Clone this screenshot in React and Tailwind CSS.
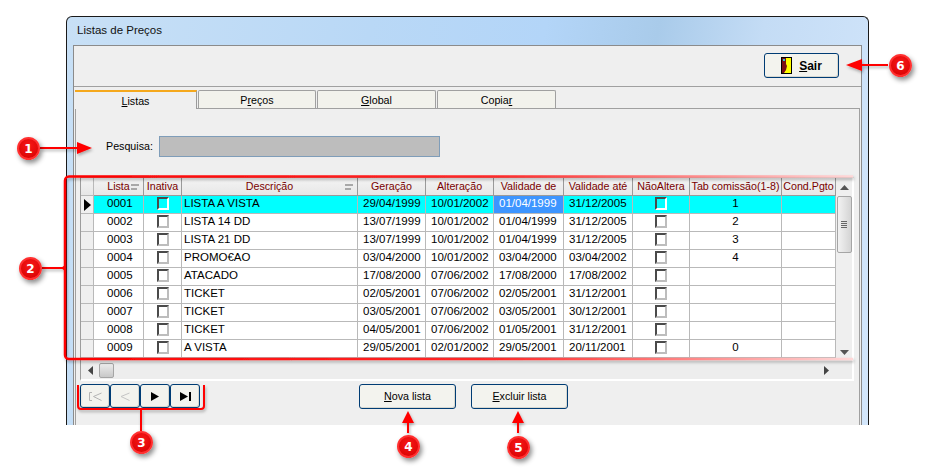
import React from "react";

const cols = [
  { label: "Lista", w: "w-[50px]", sort: true },
  { label: "Inativa", w: "w-[38px]" },
  { label: "Descrição", w: "w-[176px]", sort: true },
  { label: "Geração", w: "w-[68px]" },
  { label: "Alteração", w: "w-[68px]" },
  { label: "Validade de", w: "w-[70px]" },
  { label: "Validade até", w: "w-[69px]" },
  { label: "NãoAltera", w: "w-[57px]" },
  { label: "Tab comissão(1-8)", w: "w-[92px]" },
  { label: "Cond.Pgto", w: "w-[54px]" },
];

const rows = [
  ["0001", "LISTA A VISTA", "29/04/1999", "10/01/2002", "01/04/1999", "31/12/2005", "1"],
  ["0002", "LISTA 14 DD", "13/07/1999", "10/01/2002", "01/04/1999", "31/12/2005", "2"],
  ["0003", "LISTA 21 DD", "13/07/1999", "10/01/2002", "01/04/1999", "31/12/2005", "3"],
  ["0004", "PROMO€AO", "03/04/2000", "10/01/2002", "03/04/2000", "03/04/2002", "4"],
  ["0005", "ATACADO", "17/08/2000", "07/06/2002", "17/08/2000", "17/08/2002", ""],
  ["0006", "TICKET", "02/05/2001", "07/06/2002", "02/05/2001", "31/12/2001", ""],
  ["0007", "TICKET", "03/05/2001", "07/06/2002", "03/05/2001", "30/12/2001", ""],
  ["0008", "TICKET", "04/05/2001", "07/06/2002", "01/05/2001", "31/12/2001", ""],
  ["0009", "A VISTA", "29/05/2001", "02/01/2002", "29/05/2001", "20/11/2001", "0"],
];

function Check({ selected }) {
  return (
    <span className={`block w-[12px] h-[13px] border-2 border-t-[#4a4a4a] border-l-[#4a4a4a] ${selected ? "border-r-white border-b-white" : "border-r-[#bdbdbd] border-b-[#bdbdbd]"}`} />
  );
}

function Cell({ w, className = "", children }) {
  return (
    <div className={`${w} h-full shrink-0 flex items-center pb-[2px] border-r border-b border-[#b9b9b9] overflow-hidden whitespace-nowrap ${className}`}>
      {children}
    </div>
  );
}

function GridRow({ row, selected }) {
  const [id, desc, ger, alt, de, ate, tab] = row;
  return (
    <div className={`flex h-[18px] ${selected ? "bg-[#00ffff]" : "bg-white"}`}>
      <div className="w-[13px] shrink-0 flex items-center justify-center bg-[#efefef] border-r border-b border-[#b9b9b9]">
        {selected && <span className="block border-y-[6px] border-y-transparent border-l-[7px] border-l-black" />}
      </div>
      <Cell w="w-[50px]" className="pl-[13px]">{id}</Cell>
      <Cell w="w-[38px]" className="justify-center"><Check selected={selected} /></Cell>
      <Cell w="w-[176px]" className="pl-[2px]">{desc}</Cell>
      <Cell w="w-[68px]" className="pl-[5px]">{ger}</Cell>
      <Cell w="w-[68px]" className="pl-[5px]">{alt}</Cell>
      <Cell w="w-[70px]" className={`pl-[5px] ${selected ? "bg-[#3d95ff] text-white" : ""}`}>{de}</Cell>
      <Cell w="w-[69px]" className="pl-[5px]">{ate}</Cell>
      <Cell w="w-[57px]" className="justify-center"><Check selected={selected} /></Cell>
      <Cell w="w-[92px]" className="justify-center">{tab}</Cell>
      <Cell w="w-[54px]" />
    </div>
  );
}

function SortMark({ className = "" }) {
  return (
    <span className={`flex flex-col items-end gap-[2px] ${className}`}>
      <span className="block w-[8px] h-[2px] bg-[#a8a8a8]" />
      <span className="block w-[6px] h-[2px] bg-[#a8a8a8] mr-[2px]" />
    </span>
  );
}

function Tab({ w, active, children }) {
  if (active) {
    return (
      <div className={`${w} h-[19px] -mb-px z-10 flex items-center justify-center pt-[1px] bg-[#efefef] border-t-2 border-[#f5a81c] border-r border-r-[#9a9a9a]`}>
        {children}
      </div>
    );
  }
  return (
    <div className={`${w} h-[18px] flex items-center justify-center pt-[2px] bg-[#f2f2ec] border border-b-0 border-[#a0a0a0] rounded-t-[2px]`}>
      {children}
    </div>
  );
}

function Btn({ className = "", children }) {
  return (
    <button className={`flex items-center justify-center bg-[#f3f3ee] border border-[#003c74] rounded-[3px] shadow-[inset_-1px_-1px_0_#d8d8d0] ${className}`}>
      {children}
    </button>
  );
}

function Badge({ n, className }) {
  return (
    <div className={`absolute w-[23px] h-[23px] rounded-full flex items-center justify-center text-white text-[12px] font-bold border-2 border-[#ff3030] bg-[radial-gradient(circle_at_50%_35%,#f81818,#d40000)] shadow-[2px_3px_5px_rgba(0,0,0,0.45)] [font-family:'DejaVu_Sans',sans-serif] ${className}`}>
      {n}
    </div>
  );
}

function ScrollUp() {
  return (
    <svg width="9" height="5" viewBox="0 0 9 5"><path d="M4.5 0L9 5H0z" fill="#555" /></svg>
  );
}

export default function App() {
  return (
    <div className="relative w-[929px] h-[476px] bg-white overflow-hidden text-[11.5px] text-black [font-family:'Liberation_Sans',sans-serif] pt-[16px] pl-[66px]">
      {/* janela */}
      <div className="w-[803px] h-[409px] flex flex-col border-x border-t border-[#1a1a1a] rounded-t-[6px] bg-[linear-gradient(100deg,#c8e0f6_0%,#b9d8f6_35%,#b3d5f8_55%,#a9cbea_68%,#c4dcf5_80%,#d3e6fb_100%)] px-[6px]">
        <div className="h-[28px] shrink-0 flex items-center pl-[4px] text-[11.5px] text-[#111]">Listas de Preços</div>
        <div className="flex-1 flex flex-col bg-[#efefef] border-x border-t border-[#8b8b8b]">
          <div className="h-[41px] shrink-0 flex items-start justify-end pt-[7px] pr-[22px] border-b border-[#a0a0a0]">
            <Btn className="w-[75px] h-[25px] gap-[7px] font-bold text-[12px]">
              <svg width="11" height="17" viewBox="0 0 11 17">
                <rect width="11" height="17" fill="#000" />
                <rect x="1" y="1" width="9" height="15" fill="#ffff00" />
                <path d="M1 1h4v6l1 2-1 4-2 3H1z" fill="#7a0f16" />
                <rect x="2" y="2" width="2" height="2" fill="#33c4d6" />
              </svg>
              <span><u>S</u>air</span>
            </Btn>
          </div>

          <div className="flex-1 flex flex-col pt-[3px] pl-[1px] pr-[1px]">
            <div className="flex h-[18px] items-end gap-px shrink-0 text-[10.7px]">
              <Tab w="w-[122px]" active><span><u>L</u>istas</span></Tab>
              <Tab w="w-[118px]"><span>P<u>r</u>eços</span></Tab>
              <Tab w="w-[119px]"><span><u>G</u>lobal</span></Tab>
              <Tab w="w-[119px]"><span>Copia<u>r</u></span></Tab>
            </div>
            <div className="flex-1 flex flex-col border-l border-r border-t border-[#a0a0a0] px-[4px]">
              <div className="h-[27px] shrink-0" />
              <div className="flex items-center h-[21px] shrink-0 pl-[26px] gap-[7px]">
                <span className="w-[46px] text-[10.7px] whitespace-nowrap">Pesquisa:</span>
                <div className="w-[281px] h-[21px] bg-[#bdbdbd] border border-[#7f9db9]" />
              </div>
              <div className="h-[20px] shrink-0" />

              {/* grade */}
              <div className="w-[774px] h-[204px] shrink-0 flex flex-col border-t border-l border-[#9c9c9c] border-r-2 border-r-white border-b-2 border-b-white">
                <div className="flex h-[184px] shrink-0">
                  <div className="w-[755px] shrink-0">
                    <div className="flex h-[18px] bg-[linear-gradient(#f4f4f4,#e6e6e6)] text-[#7a0000] text-[10.7px]">
                      <div className="w-[13px] shrink-0 border-r border-b border-[#b9b9b9]" />
                      {cols.map((c) => (
                        <div key={c.label} className={`${c.w} relative shrink-0 flex items-center justify-center border-r border-b border-[#9a9a9a] whitespace-nowrap overflow-hidden`}>
                          {c.label}
                          {c.sort && <SortMark className="absolute right-[4px] top-[6px]" />}
                        </div>
                      ))}
                    </div>
                    {rows.map((r, i) => (
                      <GridRow key={r[0]} row={r} selected={i === 0} />
                    ))}
                  </div>
                  <div className="flex-1 flex flex-col items-center bg-[#efefef]">
                    <div className="h-[18px] flex items-center"><ScrollUp /></div>
                    <div className="w-[15px] h-[57px] flex flex-col items-center justify-center gap-[1px] rounded-[2px] border border-[#a5a5a5] bg-[linear-gradient(90deg,#f2f2f2,#d4d4d4)]">
                      <span className="block w-[6px] h-px bg-[#666]" />
                      <span className="block w-[6px] h-px bg-[#666]" />
                      <span className="block w-[6px] h-px bg-[#666]" />
                      <span className="block w-[6px] h-px bg-[#666]" />
                    </div>
                    <div className="flex-1" />
                    <div className="h-[14px] flex items-center rotate-180 mb-[2px]"><ScrollUp /></div>
                  </div>
                </div>
                <div className="h-[17px] shrink-0 flex items-center bg-[#ededed] pl-[7px] pr-[23px]">
                  <svg width="5" height="9" viewBox="0 0 5 9"><path d="M5 0v9L0 4.5z" fill="#444" /></svg>
                  <div className="ml-[6px] w-[15px] h-[15px] rounded-[2px] border border-[#a5a5a5] bg-[linear-gradient(#ececec,#c8c8c8)]" />
                  <div className="flex-1" />
                  <svg width="5" height="9" viewBox="0 0 5 9"><path d="M0 0v9l5-4.5z" fill="#444" /></svg>
                </div>
              </div>

              {/* botoes */}
              <div className="flex items-start pt-[3px] text-[10.7px]">
                <div className="flex">
                  <Btn className="w-[30px] h-[24px]">
                    <svg width="13" height="9" viewBox="0 0 13 9" fill="none" stroke="#b4b4b4"><path d="M3 .5H.5v8H3M12.5 1L4.5 4.5l8 4" /></svg>
                  </Btn>
                  <Btn className="w-[30px] h-[24px]">
                    <svg width="10" height="9" viewBox="0 0 10 9" fill="none" stroke="#c4c4c4"><path d="M9.5 1L1 4.5l8.5 4" /></svg>
                  </Btn>
                  <Btn className="w-[30px] h-[24px]">
                    <svg width="8" height="9" viewBox="0 0 8 9"><path d="M0 0l8 4.5L0 9z" fill="#000" /></svg>
                  </Btn>
                  <Btn className="w-[30px] h-[24px]">
                    <svg width="11" height="9" viewBox="0 0 11 9"><path d="M0 0l8 4.5L0 9zM9 0h2v9H9z" fill="#000" /></svg>
                  </Btn>
                </div>
                <div className="flex gap-[15px] ml-[159px]">
                  <Btn className="w-[97px] h-[25px]"><span><u>N</u>ova lista</span></Btn>
                  <Btn className="w-[97px] h-[25px]"><span><u>E</u>xcluir lista</span></Btn>
                </div>
              </div>
            </div>
          </div>
        </div>
      </div>

      {/* anotacoes */}
      <svg className="absolute left-0 top-0 pointer-events-none" width="929" height="476" viewBox="0 0 929 476" fill="none">
        <defs>
          <linearGradient id="fade" x1="65" x2="853" y1="0" y2="0" gradientUnits="userSpaceOnUse">
            <stop offset="0" stopColor="#ff0000" />
            <stop offset="0.55" stopColor="#ff2a2a" />
            <stop offset="0.85" stopColor="#ff9c9c" />
            <stop offset="1" stopColor="#ffd8d8" />
          </linearGradient>
          <filter id="sh" x="-10%" y="-10%" width="120%" height="130%">
            <feDropShadow dx="1" dy="2" stdDeviation="1.5" floodColor="#000" floodOpacity="0.3" />
          </filter>
        </defs>
        <g filter="url(#sh)">
          <path d="M853 176.5H69a4 4 0 0 0-4 4v174.5a4 4 0 0 0 4 4h784" stroke="url(#fade)" strokeWidth="2.5" />
          <path d="M40 148H78" stroke="#f00" strokeWidth="2" />
          <path d="M92 148L77 142v12z" fill="#f00" />
          <path d="M42 268H64" stroke="#f00" strokeWidth="2" />
          <path d="M61 268l4-3v6z" fill="#f00" />
          <path d="M78 385v21a3 3 0 0 0 3 3h120a3 3 0 0 0 3-3v-21" stroke="#f00" strokeWidth="2" />
          <path d="M141 409v22" stroke="#f00" strokeWidth="2" />
          <path d="M408 417v16" stroke="#f00" strokeWidth="2" />
          <path d="M408 411l-6 12h12z" fill="#f00" />
          <path d="M518 417v16" stroke="#f00" strokeWidth="2" />
          <path d="M518 411l-6 12h12z" fill="#f00" />
          <path d="M860 65h28" stroke="#f00" strokeWidth="2" />
          <path d="M846 65l16-6v12z" fill="#f00" />
        </g>
      </svg>
      <Badge n="1" className="left-[17px] top-[137px]" />
      <Badge n="2" className="left-[19px] top-[257px]" />
      <Badge n="3" className="left-[130px] top-[431px]" />
      <Badge n="4" className="left-[397px] top-[435px]" />
      <Badge n="5" className="left-[507px] top-[436px]" />
      <Badge n="6" className="left-[889px] top-[54px]" />
    </div>
  );
}
